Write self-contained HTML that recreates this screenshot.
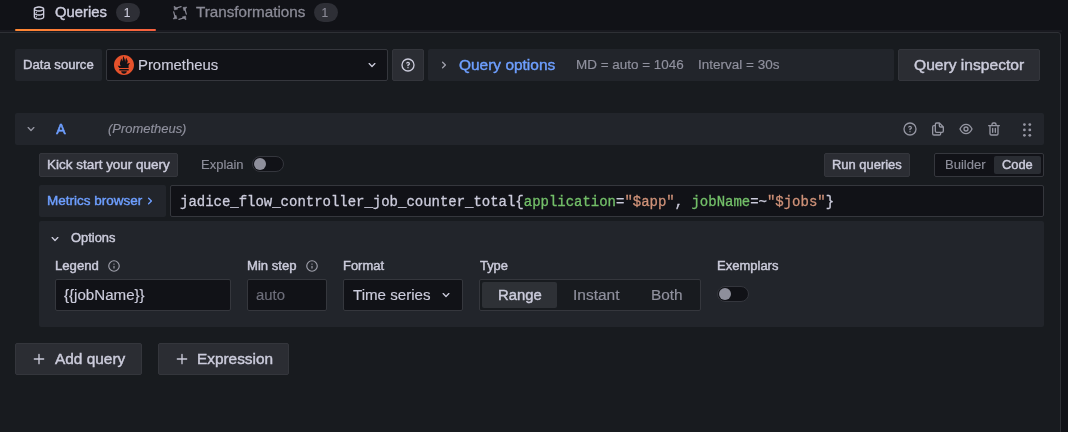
<!DOCTYPE html>
<html lang="en"><head><meta charset="utf-8"><title>Query editor</title>
<style>
*{box-sizing:border-box}
html,body{margin:0;padding:0}
body{width:1068px;height:432px;overflow:hidden;background:#111217;position:relative;font-family:"Liberation Sans",sans-serif;color:#ccccdc}
.abs,.t,.ic,.box{position:absolute}
.t{white-space:pre;line-height:20px;font-weight:400;transform-origin:0 0;-webkit-text-stroke:0.15px currentColor}
.t.m{-webkit-text-stroke:0.4px currentColor}
.t.m3{-webkit-text-stroke:0.6px currentColor}
.t.m2{-webkit-text-stroke:0.28px currentColor}
.t.i{font-style:italic}
.ic{display:block;overflow:visible}
.box{border-radius:2px}
.sec{background:#22252b}
.btn{background:#2b2d33;border:1px solid #34363c}
.inp{background:#111217;border:1px solid #35373d}
.sw{position:absolute;width:32px;height:16px;border-radius:8px;background:#111217;border:1px solid #34363d}
.sw i{position:absolute;left:1px;top:1px;width:12px;height:12px;border-radius:6px;background:#8e8f9b}
.badge{position:absolute;height:19px;width:24px;border-radius:9.5px;background:#2e2f36}
</style></head><body>

<div class="abs" style="left:0;top:30px;width:1062px;height:2px;background:#191a20"></div>
<div class="abs" style="left:-2px;top:32px;width:1063px;height:420px;background:#181b1f;border:1px solid #2e3035;border-top-right-radius:3px"></div>
<div class="abs" style="left:15px;top:29px;width:141px;height:2px;border-radius:1px;background:linear-gradient(90deg,#ff8833 0%,#f55f3e 100%)"></div>
<svg class="ic" style="left:31.00px;top:5.00px" width="16" height="16" viewBox="0 0 24 24"><path fill="#ccccdc" d="M8,16.5a1,1,0,1,0,1,1A1,1,0,0,0,8,16.5ZM12,2C8,2,4,3.37,4,6V18c0,2.63,4,4,8,4s8-1.37,8-4V6C20,3.37,16,2,12,2Zm6,16c0,.71-2.28,2-6,2s-6-1.29-6-2V14.73A13.16,13.16,0,0,0,12,16a13.16,13.16,0,0,0,6-1.27Zm0-6c0,.71-2.28,2-6,2s-6-1.29-6-2V8.73A13.16,13.16,0,0,0,12,10a13.16,13.16,0,0,0,6-1.27ZM12,8C8.28,8,6,6.71,6,6s2.280-2,6-2,6,1.29,6,2S15.72,8,12,8ZM8,10.5a1,1,0,1,0,1,1A1,1,0,0,0,8,10.500Z"/></svg>
<div class="badge" style="left:116px;top:3px"></div>
<div class="badge" style="left:314px;top:3px"></div>
<svg class="ic" style="left:172px;top:5px" width="16" height="16" viewBox="0 0 16 16"><g transform="rotate(0 8 8)"><path d="M9.1 1.7L4.4 3.0" stroke="#8b8b97" stroke-width="1.2" stroke-linecap="round" fill="none"/><path d="M2.0 1.1L5.9 3.9L2.5 5.0Z" fill="#8b8b97" stroke="#8b8b97" stroke-width="0.5" stroke-linejoin="round"/></g><g transform="rotate(90 8 8)"><path d="M9.1 1.7L4.4 3.0" stroke="#8b8b97" stroke-width="1.2" stroke-linecap="round" fill="none"/><path d="M2.0 1.1L5.9 3.9L2.5 5.0Z" fill="#8b8b97" stroke="#8b8b97" stroke-width="0.5" stroke-linejoin="round"/></g><g transform="rotate(180 8 8)"><path d="M9.1 1.7L4.4 3.0" stroke="#8b8b97" stroke-width="1.2" stroke-linecap="round" fill="none"/><path d="M2.0 1.1L5.9 3.9L2.5 5.0Z" fill="#8b8b97" stroke="#8b8b97" stroke-width="0.5" stroke-linejoin="round"/></g><g transform="rotate(270 8 8)"><path d="M9.1 1.7L4.4 3.0" stroke="#8b8b97" stroke-width="1.2" stroke-linecap="round" fill="none"/><path d="M2.0 1.1L5.9 3.9L2.5 5.0Z" fill="#8b8b97" stroke="#8b8b97" stroke-width="0.5" stroke-linejoin="round"/></g></svg>
<div class="box sec" style="left:15px;top:49px;width:87px;height:32px"></div>
<div class="box inp" style="left:106px;top:49px;width:282px;height:32px"></div>
<svg class="ic" style="left:114px;top:55px" width="20" height="20" viewBox="0 0 115 115"><circle cx="57.5" cy="57.5" r="56" fill="#111217"/><path fill="#e6522c" d="M57.5 0C25.743 0 0 25.744 0 57.5c0 31.755 25.743 57.5 57.5 57.5S115 89.255 115 57.5C115 25.744 89.257 0 57.5 0zm0 107.616c-9.035 0-16.36-6.036-16.36-13.48h32.72c0 7.443-7.325 13.48-16.36 13.48zm27.021-17.941H30.476v-9.8h54.046v9.8zm-.194-14.844H30.631c-.179-.206-.361-.409-.534-.618-5.532-6.717-6.835-10.224-8.1-13.798-.021-.118 6.709 1.375 11.481 2.449 0 0 2.456.568 6.046 1.222-3.447-4.041-5.494-9.178-5.494-14.429 0-11.528 8.842-21.602 5.652-29.745 3.105.253 6.426 6.553 6.65 16.404 3.301-4.562 4.682-12.892 4.682-18 0-5.288 3.484-11.431 6.97-11.641-3.107 5.12.805 9.509 4.282 20.398 1.304 4.09 1.138 10.973 2.144 15.338.334-9.066 1.893-22.294 7.644-26.861-.254 5.183 2.508 11.183 4.89 15.238 4.178 7.067.716 13.692-3.63 18.825 3.484-.654 6.018-1.244 6.018-1.244 5.042-1.065 12.396-3.033 12.396-3.033s-1.072 4.405-8.266 13.495z"/></svg>
<svg class="ic" style="left:364.00px;top:57.00px" width="16" height="16" viewBox="0 0 24 24"><path fill="#ccccdc" d="M17,9.17a1,1,0,0,0-1.41,0L12,12.71,8.46,9.17a1,1,0,0,0-1.41,0,1,1,0,0,0,0,1.42l4.24,4.24a1,1,0,0,0,1.42,0L17,10.59A1,1,0,0,0,17,9.17Z"/></svg>
<div class="box btn" style="left:392px;top:49px;width:32px;height:32px"></div>
<svg class="ic" style="left:400.00px;top:57.00px" width="16" height="16" viewBox="0 0 24 24"><path fill="#ccccdc" d="M11.29,15.29a1.58,1.58,0,0,0-.12.15.76.76,0,0,0-.09.18.64.64,0,0,0-.06.18,1.36,1.36,0,0,0,0,.2.84.84,0,0,0,.08.38.9.9,0,0,0,.54.54.94.94,0,0,0,.76,0,.9.9,0,0,0,.54-.54A1,1,0,0,0,13,16a1,1,0,0,0-.29-.71A1,1,0,0,0,11.29,15.29ZM12,2A10,10,0,1,0,22,12,10,10,0,0,0,12,2Zm0,18a8,8,0,1,1,8-8A8,8,0,0,1,12,20ZM12,7A3,3,0,0,0,9.4,8.5a1,1,0,1,0,1.73,1A1,1,0,0,1,12,9a1,1,0,0,1,0,2,1,1,0,0,0-1,1v1a1,1,0,0,0,2,0v-.18A3,3,0,0,0,12,7Z"/></svg>
<div class="box sec" style="left:428px;top:49px;width:466px;height:32px"></div>
<svg class="ic" style="left:436.00px;top:57.00px" width="16" height="16" viewBox="0 0 24 24"><path fill="#9fa0ab" d="M14.83,11.29,10.59,7.05a1,1,0,0,0-1.42,0,1,1,0,0,0,0,1.41L12.71,12,9.17,15.54a1,1,0,0,0,0,1.41,1,1,0,0,0,.71.29,1,1,0,0,0,.71-.29l4.24-4.24A1,1,0,0,0,14.83,11.29Z"/></svg>
<div class="box btn" style="left:898px;top:49px;width:142px;height:32px"></div>
<div class="box sec" style="left:15px;top:113px;width:1029px;height:32px"></div>
<svg class="ic" style="left:23.00px;top:121.00px" width="16" height="16" viewBox="0 0 24 24"><path fill="#9596a2" d="M17,9.17a1,1,0,0,0-1.41,0L12,12.71,8.46,9.17a1,1,0,0,0-1.41,0,1,1,0,0,0,0,1.42l4.24,4.24a1,1,0,0,0,1.42,0L17,10.59A1,1,0,0,0,17,9.17Z"/></svg>
<svg class="ic" style="left:902.00px;top:121.00px" width="16" height="16" viewBox="0 0 24 24"><path fill="#9596a2" d="M11.29,15.29a1.58,1.58,0,0,0-.12.15.76.76,0,0,0-.09.18.64.64,0,0,0-.06.18,1.36,1.36,0,0,0,0,.2.84.84,0,0,0,.08.38.9.9,0,0,0,.54.54.94.94,0,0,0,.76,0,.9.9,0,0,0,.54-.54A1,1,0,0,0,13,16a1,1,0,0,0-.29-.71A1,1,0,0,0,11.29,15.29ZM12,2A10,10,0,1,0,22,12,10,10,0,0,0,12,2Zm0,18a8,8,0,1,1,8-8A8,8,0,0,1,12,20ZM12,7A3,3,0,0,0,9.4,8.5a1,1,0,1,0,1.73,1A1,1,0,0,1,12,9a1,1,0,0,1,0,2,1,1,0,0,0-1,1v1a1,1,0,0,0,2,0v-.18A3,3,0,0,0,12,7Z"/></svg>
<svg class="ic" style="left:930.00px;top:121.00px" width="16" height="16" viewBox="0 0 24 24"><path fill="#9596a2" d="M21,8.94a1.31,1.31,0,0,0-.06-.27l0-.09a1.07,1.07,0,0,0-.19-.28h0l-6-6h0a1.07,1.07,0,0,0-.28-.19.32.32,0,0,0-.09,0A.88.88,0,0,0,14.05,2H10A3,3,0,0,0,7,5V6H6A3,3,0,0,0,3,9V19a3,3,0,0,0,3,3h8a3,3,0,0,0,3-3V18h1a3,3,0,0,0,3-3V9S21,9,21,8.94ZM15,5.41,17.59,8H16a1,1,0,0,1-1-1ZM15,19a1,1,0,0,1-1,1H6a1,1,0,0,1-1-1V9A1,1,0,0,1,6,8H7v7a3,3,0,0,0,3,3h5Zm4-4a1,1,0,0,1-1,1H10a1,1,0,0,1-1-1V5a1,1,0,0,1,1-1h3V7a3,3,0,0,0,3,3h3Z"/></svg>
<svg class="ic" style="left:958.00px;top:121.00px" width="16" height="16" viewBox="0 0 24 24"><path fill="#9596a2" d="M21.92,11.6C19.9,6.91,16.1,4,12,4S4.1,6.91,2.08,11.6a1,1,0,0,0,0,.8C4.1,17.09,7.9,20,12,20s7.9-2.91,9.92-7.6A1,1,0,0,0,21.92,11.6ZM12,18c-3.17,0-6.17-2.29-7.9-6C5.83,8.29,8.83,6,12,6s6.17,2.29,7.9,6C18.17,15.71,15.17,18,12,18ZM12,8a4,4,0,1,0,4,4A4,4,0,0,0,12,8Zm0,6a2,2,0,1,1,2-2A2,2,0,0,1,12,14Z"/></svg>
<svg class="ic" style="left:986.00px;top:121.00px" width="16" height="16" viewBox="0 0 24 24"><path fill="#9596a2" d="M10,18a1,1,0,0,0,1-1V11a1,1,0,0,0-2,0v6A1,1,0,0,0,10,18ZM20,6H16V5a3,3,0,0,0-3-3H11A3,3,0,0,0,8,5V6H4A1,1,0,0,0,4,8H5V19a3,3,0,0,0,3,3h8a3,3,0,0,0,3-3V8h1a1,1,0,0,0,0-2ZM10,5a1,1,0,0,1,1-1h2a1,1,0,0,1,1,1V6H10Zm7,14a1,1,0,0,1-1,1H8a1,1,0,0,1-1-1V8H17Zm-3-1a1,1,0,0,0,1-1V11a1,1,0,0,0-2,0v6A1,1,0,0,0,14,18Z"/></svg>
<svg class="ic" style="left:0;top:0" width="1068" height="432" viewBox="0 0 1068 432"><circle cx="1024.4" cy="124.6" r="1.4" fill="#9596a2"/><circle cx="1024.4" cy="129.95" r="1.4" fill="#9596a2"/><circle cx="1024.4" cy="135.3" r="1.4" fill="#9596a2"/><circle cx="1029.8" cy="124.6" r="1.4" fill="#9596a2"/><circle cx="1029.8" cy="129.95" r="1.4" fill="#9596a2"/><circle cx="1029.8" cy="135.3" r="1.4" fill="#9596a2"/></svg>
<div class="box btn" style="left:39px;top:153px;width:139px;height:24px"></div>
<div class="sw" style="left:252px;top:156px"><i></i></div>
<div class="box btn" style="left:824px;top:153px;width:86px;height:24px"></div>
<div class="box" style="left:934px;top:153px;width:110px;height:24px;background:#111217;border:1px solid #35373d"></div>
<div class="box" style="left:994px;top:156px;width:47px;height:18px;background:#2a2d33"></div>
<div class="box sec" style="left:39px;top:185px;width:127px;height:32px"></div>
<svg class="ic" style="left:142.00px;top:193.00px" width="16" height="16" viewBox="0 0 24 24"><path fill="#6e9fff" d="M14.83,11.29,10.59,7.05a1,1,0,0,0-1.42,0,1,1,0,0,0,0,1.41L12.71,12,9.17,15.54a1,1,0,0,0,0,1.41,1,1,0,0,0,.71.29,1,1,0,0,0,.71-.29l4.24-4.24A1,1,0,0,0,14.83,11.29Z"/></svg>
<div class="box inp" style="left:170px;top:185px;width:874px;height:32px"></div>
<div class="box sec" style="left:39px;top:221px;width:1005px;height:106px"></div>
<svg class="ic" style="left:46.90px;top:230.60px" width="16" height="16" viewBox="0 0 24 24"><path fill="#ccccdc" d="M17,9.17a1,1,0,0,0-1.41,0L12,12.71,8.46,9.17a1,1,0,0,0-1.41,0,1,1,0,0,0,0,1.42l4.24,4.24a1,1,0,0,0,1.42,0L17,10.59A1,1,0,0,0,17,9.17Z"/></svg>
<svg class="ic" style="left:107.00px;top:259.00px" width="14" height="14" viewBox="0 0 24 24"><path fill="#9fa0ab" d="M12,2A10,10,0,1,0,22,12,10.01114,10.01114,0,0,0,12,2Zm0,18a8,8,0,1,1,8-8A8.00917,8.00917,0,0,1,12,20Zm0-8.5a1,1,0,0,0-1,1v3a1,1,0,0,0,2,0v-3A1,1,0,0,0,12,11.5Zm0-4a1.25,1.25,0,1,0,1.25,1.25A1.25,1.25,0,0,0,12,7.5Z"/></svg>
<svg class="ic" style="left:305.00px;top:259.00px" width="14" height="14" viewBox="0 0 24 24"><path fill="#9fa0ab" d="M12,2A10,10,0,1,0,22,12,10.01114,10.01114,0,0,0,12,2Zm0,18a8,8,0,1,1,8-8A8.00917,8.00917,0,0,1,12,20Zm0-8.5a1,1,0,0,0-1,1v3a1,1,0,0,0,2,0v-3A1,1,0,0,0,12,11.5Zm0-4a1.25,1.25,0,1,0,1.25,1.25A1.25,1.25,0,0,0,12,7.5Z"/></svg>
<div class="box inp" style="left:55px;top:279px;width:176px;height:32px"></div>
<div class="box inp" style="left:247px;top:279px;width:80px;height:32px"></div>
<div class="box inp" style="left:343px;top:279px;width:120px;height:32px"></div>
<svg class="ic" style="left:438.30px;top:287.30px" width="16" height="16" viewBox="0 0 24 24"><path fill="#ccccdc" d="M17,9.17a1,1,0,0,0-1.41,0L12,12.71,8.46,9.17a1,1,0,0,0-1.41,0,1,1,0,0,0,0,1.42l4.24,4.24a1,1,0,0,0,1.42,0L17,10.59A1,1,0,0,0,17,9.17Z"/></svg>
<div class="box" style="left:479px;top:279px;width:222px;height:32px;background:#181b1f;border:1px solid #35373d"></div>
<div class="box" style="left:482px;top:282px;width:75px;height:26px;background:#2e3136"></div>
<div class="sw" style="left:717px;top:286px"><i></i></div>
<div class="box btn" style="left:15px;top:343px;width:127px;height:32px"></div>
<svg class="ic" style="left:31.00px;top:351.00px" width="16" height="16" viewBox="0 0 24 24"><path fill="#ccccdc" d="M19,11H13V5a1,1,0,0,0-2,0v6H5a1,1,0,0,0,0,2h6v6a1,1,0,0,0,2,0V13h6a1,1,0,0,0,0-2Z"/></svg>
<div class="box btn" style="left:158px;top:343px;width:131px;height:32px"></div>
<svg class="ic" style="left:174.00px;top:351.00px" width="16" height="16" viewBox="0 0 24 24"><path fill="#ccccdc" d="M19,11H13V5a1,1,0,0,0-2,0v6H5a1,1,0,0,0,0,2h6v6a1,1,0,0,0,2,0V13h6a1,1,0,0,0,0-2Z"/></svg>
<div id="txt" style="position:absolute;left:0;top:0;width:1068px;height:432px;will-change:transform">
<span class="t m" style="left:55.46px;top:1.65px;font-size:14px;color:#ccccdc;transform:scaleX(1.0578)">Queries</span>
<span class="t" style="left:123.79px;top:3.30px;font-size:12px;color:#ccccdc;transform:scaleX(1.0000)">1</span>
<span class="t m2" style="left:196.25px;top:1.65px;font-size:14px;color:#8b8b97;transform:scaleX(1.0865)">Transformations</span>
<span class="t" style="left:321.49px;top:3.30px;font-size:12px;color:#8b8b97;transform:scaleX(1.0000)">1</span>
<span class="t m" style="left:23.19px;top:55.10px;font-size:12px;color:#ccccdc;transform:scaleX(1.0927)">Data source</span>
<span class="t" style="left:138.05px;top:55.10px;font-size:14px;color:#ccccdc;transform:scaleX(1.0623)">Prometheus</span>
<span class="t m" style="left:459.45px;top:55.10px;font-size:14px;color:#6e9fff;transform:scaleX(1.1039)">Query options</span>
<span class="t" style="left:575.53px;top:55.10px;font-size:12px;color:#90919e;transform:scaleX(1.1207)">MD = auto = 1046</span>
<span class="t" style="left:698.34px;top:55.10px;font-size:12px;color:#90919e;transform:scaleX(1.1247)">Interval = 30s</span>
<span class="t m" style="left:913.64px;top:55.10px;font-size:14px;color:#ccccdc;transform:scaleX(1.1145)">Query inspector</span>
<span class="t m3" style="left:56.19px;top:119.10px;font-size:14px;color:#6e9fff;transform:scaleX(1.0000)">A</span>
<span class="t i" style="left:108.05px;top:118.83px;font-size:12px;color:#90919e;transform:scaleX(1.0788)">(Prometheus)</span>
<span class="t m" style="left:46.96px;top:155.00px;font-size:12px;color:#ccccdc;transform:scaleX(1.1226)">Kick start your query</span>
<span class="t" style="left:201.16px;top:155.00px;font-size:12px;color:#8d8e9a;transform:scaleX(1.0823)">Explain</span>
<span class="t m" style="left:46.96px;top:191.00px;font-size:12px;color:#6e9fff;transform:scaleX(1.1243)">Metrics browser</span>
<span class="t m" style="left:832.41px;top:155.00px;font-size:12px;color:#ccccdc;transform:scaleX(1.0784)">Run queries</span>
<span class="t" style="left:944.65px;top:155.00px;font-size:12px;color:#8d8e9a;transform:scaleX(1.0869)">Builder</span>
<span class="t m" style="left:1002.28px;top:155.00px;font-size:12px;color:#ccccdc;transform:scaleX(1.0714)">Code</span>
<span class="t m" style="left:70.81px;top:227.95px;font-size:12px;color:#ccccdc;transform:scaleX(1.0739)">Options</span>
<span class="t m" style="left:55.39px;top:256.05px;font-size:12px;color:#ccccdc;transform:scaleX(1.0948)">Legend</span>
<span class="t" style="left:64.33px;top:284.70px;font-size:14px;color:#ccccdc;transform:scaleX(1.0790)">{{jobName}}</span>
<span class="t m" style="left:247.49px;top:256.05px;font-size:12px;color:#ccccdc;transform:scaleX(1.0920)">Min step</span>
<span class="t" style="left:255.70px;top:284.70px;font-size:14px;color:#6d6e7a;transform:scaleX(1.0622)">auto</span>
<span class="t m" style="left:343.11px;top:256.05px;font-size:12px;color:#ccccdc;transform:scaleX(1.0793)">Format</span>
<span class="t" style="left:352.87px;top:284.70px;font-size:14px;color:#ccccdc;transform:scaleX(1.0788)">Time series</span>
<span class="t m" style="left:479.53px;top:256.05px;font-size:12px;color:#ccccdc;transform:scaleX(1.0742)">Type</span>
<span class="t m" style="left:497.63px;top:284.70px;font-size:14px;color:#ccccdc;transform:scaleX(1.0593)">Range</span>
<span class="t" style="left:572.60px;top:284.70px;font-size:14px;color:#90919e;transform:scaleX(1.1068)">Instant</span>
<span class="t" style="left:650.52px;top:284.70px;font-size:14px;color:#90919e;transform:scaleX(1.0995)">Both</span>
<span class="t m" style="left:717.30px;top:256.05px;font-size:12px;color:#ccccdc;transform:scaleX(1.0843)">Exemplars</span>
<span class="t m" style="left:55.22px;top:349.10px;font-size:14px;color:#ccccdc;transform:scaleX(1.1008)">Add query</span>
<span class="t m" style="left:197.21px;top:349.10px;font-size:14px;color:#ccccdc;transform:scaleX(1.0976)">Expression</span>
<div class="abs" style="left:180px;top:192px;-webkit-text-stroke:0.3px currentColor;white-space:pre;font-family:'Liberation Mono',monospace;font-size:14px;line-height:20px;letter-spacing:-0.017px"><span style="color:#ccccdc">jadice_flow_controller_job_counter_total{</span><span style="color:#73bf69">application</span><span style="color:#ccccdc">=</span><span style="color:#ce9178">"$app"</span><span style="color:#ccccdc">, </span><span style="color:#73bf69">jobName</span><span style="color:#ccccdc">=~</span><span style="color:#ce9178">"$jobs"</span><span style="color:#ccccdc">}</span></div>
</div>
</body></html>
